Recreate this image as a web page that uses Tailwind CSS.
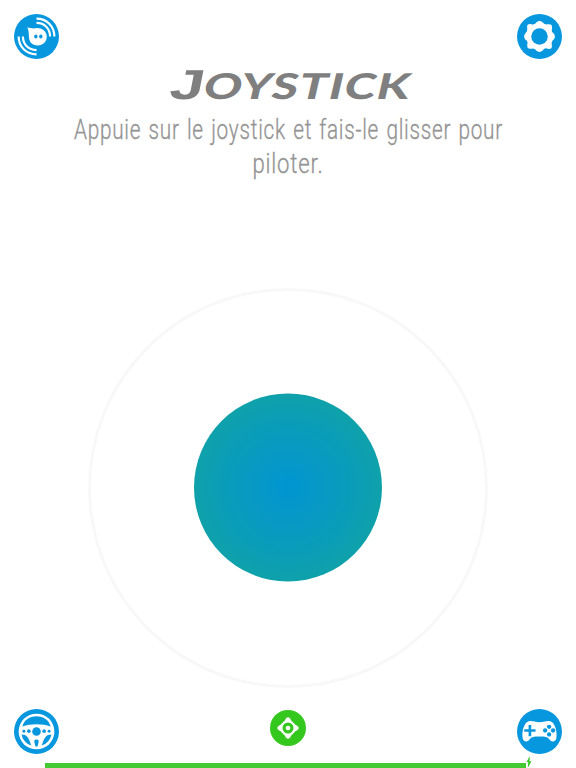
<!DOCTYPE html>
<html lang="fr">
<head>
<meta charset="utf-8">
<meta name="viewport" content="width=device-width, initial-scale=1">
<title>Joystick</title>
<script src="https://cdn.jsdelivr.net/npm/@tailwindcss/browser@4"></script>
</head>
<body class="bg-white">
<main class="relative flex h-screen w-full flex-col overflow-hidden bg-white font-['Roboto','Liberation_Sans',sans-serif]">
  <header class="flex h-[59px] shrink-0 justify-between px-3.5 pt-3.5">
    <button aria-label="Robot" class="size-[45px]">
      <svg class="size-full" viewBox="17 17 136 136" fill="none">
        <circle cx="85" cy="85" r="68" fill="#0797df"/>
        <path d="M57 58L77 61C94 55 116 66 116 85C116 101 104 112 89 112C72 112 62 101 62 84C62 74 61 65 57 58Z" fill="#fff"/>
        <ellipse cx="83" cy="85" rx="5" ry="6" fill="#0797df"/><ellipse cx="98" cy="85" rx="5" ry="6" fill="#0797df"/>
        <g stroke="#fff" stroke-width="6.5">
          <path d="M85 31C116 31 139 54 139 85"/><path d="M85 44C109 44 126 61 126 85"/>
          <path d="M31 85C31 116 54 139 85 139"/><path d="M44 85C44 109 61 126 85 126"/>
        </g>
      </svg>
    </button>
    <button aria-label="Réglages" class="size-[45px]">
      <svg class="size-full" viewBox="15 17 136 136">
        <circle cx="83" cy="85" r="68" fill="#0797df"/>
        <path d="M74 42Q83 35 92 42Q98 50 107 48Q117 47 120 51Q122 58 120 65Q119 71 126 76Q133 85 126 94Q118 100 120 109Q122 117 118 121Q112 124 105 121Q97 120 92 128Q83 135 74 128Q68 120 59 122Q50 123 47 119Q44 112 47 105Q48 98 40 94Q33 85 40 76Q48 70 46 62Q44 52 48 49Q54 46 61 49Q69 50 74 42Z" fill="#fff"/>
        <circle cx="83" cy="85" r="25" fill="#0797df"/>
      </svg>
    </button>
  </header>

  <section class="flex h-[137px] shrink-0 flex-col items-center">
    <h1 class="h-[50px] w-full">
      <svg class="h-full w-full" viewBox="0 59 576 50" fill="#7f7f7f" font-weight="700">
        <text transform="translate(168 98.500) skewX(-11)" font-size="42" font-family="'Liberation Sans', sans-serif" textLength="34" lengthAdjust="spacingAndGlyphs">J</text>
        <text transform="translate(201.500 99) skewX(-13)" font-size="35.500" font-family="Lato, 'Liberation Sans', sans-serif" font-weight="900" letter-spacing="1" textLength="207" lengthAdjust="spacingAndGlyphs">OYSTICK</text>
      </svg>
    </h1>
    <p class="h-[87px] w-full">
      <svg class="h-full w-full" viewBox="0 109 576 87" fill="#949494" stroke="#949494" stroke-width=".35" font-family="Roboto, 'Liberation Sans', sans-serif" font-weight="300" font-size="28" letter-spacing="1" word-spacing="2">
        <text x="74" y="139" textLength="429" lengthAdjust="spacingAndGlyphs">Appuie sur le joystick et fais-le glisser pour</text>
        <text x="252.500" y="173" textLength="71" lengthAdjust="spacingAndGlyphs">piloter.</text>
      </svg>
    </p>
  </section>

  <section class="flex h-[513px] shrink-0 justify-center pt-[92px]">
    <div class="flex size-[400px] shrink-0 items-center justify-center rounded-full border-[3px] border-[#f8f8f8]">
      <div class="size-[188px] -translate-y-[0.5px] rounded-full bg-[radial-gradient(circle_closest-side,#0095d2_0%,#0799c5_35%,#0a9db8_70%,#0fa1aa_100%)]"></div>
    </div>
  </section>

  <footer class="flex h-[54px] shrink-0 items-start justify-between px-3.5">
    <button aria-label="Conduite" class="size-[45px]">
      <svg class="size-full" viewBox="5 5 136 136" fill="none">
        <circle cx="73" cy="73" r="68" fill="#0797df"/>
        <circle cx="73" cy="73" r="54" fill="#fff"/>
        <path d="M30 58C36 38 52 27 73 27S110 38 116 58C90 49 56 49 30 58Z" fill="#0797df"/>
        <path d="M28 82C43 82 50 91 57 115C43 111 31 99 28 82ZM118 82C103 82 96 91 89 115C103 111 115 99 118 82Z" fill="#0797df"/>
        <path d="M73 97C79 97 81 101 79 106L76 118H70L67 106C65 101 67 97 73 97Z" fill="#0797df"/>
        <circle cx="73" cy="73" r="13" fill="#0797df"/>
        <circle cx="50" cy="72" r="5.500" fill="#0797df"/><circle cx="96" cy="72" r="5.500" fill="#0797df"/>
        <circle cx="35" cy="72" r="4.500" fill="#0797df"/><circle cx="111" cy="72" r="4.500" fill="#0797df"/>
      </svg>
    </button>
    <button aria-label="Viser" class="mt-px size-9">
      <svg class="size-full" viewBox="6 6 108 108">
        <circle cx="60" cy="60" r="54" fill="#34c81e"/>
        <path d="M54 31Q60 25 66 31L69 37L83 51L89 54Q95 60 89 66L83 69L69 83L66 89Q60 95 54 89L51 83L37 69L31 66Q25 60 31 54L37 51L51 37Z" fill="#fff"/>
        <circle cx="60" cy="60" r="16.500" fill="#34c81e"/><circle cx="60" cy="60" r="7" fill="#fff"/>
      </svg>
    </button>
    <button aria-label="Manette" class="size-[45px]">
      <svg class="size-full" viewBox="15 15 136 136">
        <circle cx="83" cy="83" r="68" fill="#0797df"/>
        <path d="M49 53C60 49 67 55 83 55S106 49 117 53C130 57 137 85 134 103C132 116 119 117 112 106C107 99 101 98 83 98S59 99 54 106C47 117 34 116 32 103C29 85 36 57 49 53Z" fill="#fff"/>
        <path d="M50 63H58V76H71V84H58V97H50V84H37V76H50Z" fill="#0797df"/>
        <g fill="#0797df"><circle cx="112" cy="69" r="6.500"/><circle cx="100" cy="80" r="6.500"/><circle cx="124" cy="80" r="6.500"/><circle cx="112" cy="92" r="6.500"/></g>
      </svg>
    </button>
  </footer>
  <div class="ml-[45px] h-[5px] w-[481px] shrink-0 bg-[#43ca32]"></div>
  <svg class="absolute bottom-0 left-[526px] h-3 w-[6px]" viewBox="0 0 6 12" fill="#35c925"><path d="M3.8 0L.5 6H2.2L1.8 12L5.5 5.2H3.500Z"/></svg>
</main>
</body>
</html>
